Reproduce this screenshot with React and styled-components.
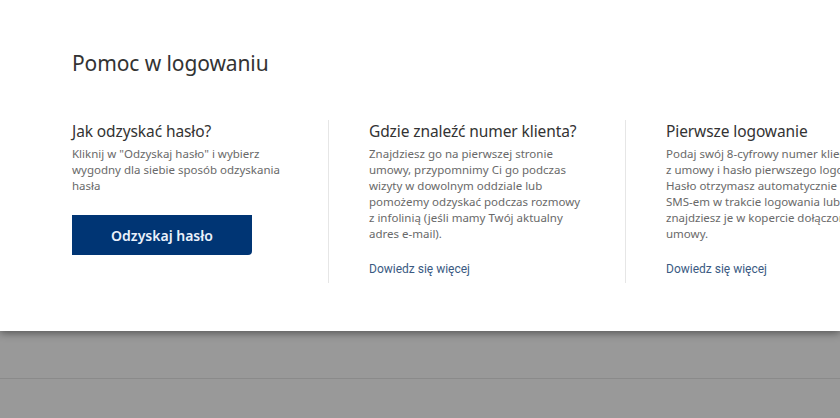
import React from "react";
import styled, {createGlobalStyle} from "styled-components";

const GlobalStyle = createGlobalStyle`
  html, body {
    margin: 0;
    padding: 0;
    background: #999999;
    font-family: "Noto Sans", "Liberation Sans", sans-serif;
  }
`;

const Page = styled.div`
  width: 840px;
  height: 418px;
  overflow: hidden;
  background: #999999;
`;

const Modal = styled.div`
  background: #ffffff;
  height: 331px;
  box-sizing: border-box;
  padding: 48px 0 0 72px;
  box-shadow: 0 2px 8px rgba(0, 0, 0, 0.45);
  position: relative;
  z-index: 1;
  overflow: hidden;
`;

const Title = styled.h1`
  margin: 0;
  font-size: 21px;
  font-weight: 400;
  color: #333333;
  line-height: 30px;
  letter-spacing: -0.1px;
`;

const Columns = styled.div`
  display: flex;
  margin-top: 42px;
  width: 900px;
`;

const Column = styled.div`
  display: flex;
  flex-direction: column;
  align-items: flex-start;
  width: 297px;
  height: 163px;
  box-sizing: border-box;
  padding: 0 40px 6px;
  border-left: 1px solid #e6e6e6;

  &:first-child {
    padding-left: 0;
    width: 256px;
    border-left: 0;
  }
`;

const Heading = styled.h2`
  margin: 0 0 4px;
  font-size: 15.5px;
  font-weight: 400;
  color: #333333;
  line-height: 22px;
  white-space: nowrap;
  letter-spacing: -0.1px;
`;

const Text = styled.p`
  margin: 0;
  font-size: 11.5px;
  line-height: 16px;
  color: #696969;
  white-space: nowrap;
`;

const Button = styled.button`
  margin-top: 21px;
  width: 180px;
  height: 40px;
  border: 0;
  border-radius: 0 0 4px 0;
  background: #003574;
  color: #eaf1fb;
  font-family: "Noto Sans", "Liberation Sans", sans-serif;
  font-size: 14px;
  font-weight: 600;
  cursor: pointer;
`;

const Link = styled.a`
  margin-top: auto;
  font-family: Roboto, "Liberation Sans", sans-serif;
  font-size: 12px;
  line-height: 16px;
  color: #3a5a82;
  text-decoration: none;
`;

const Backdrop = styled.div`
  height: 47px;
  border-bottom: 1px solid #8a8a8a;
`;

const columns = [
  {
    heading: "Gdzie znaleźć numer klienta?",
    lines: [
      "Znajdziesz go na pierwszej stronie",
      "umowy, przypomnimy Ci go podczas",
      "wizyty w dowolnym oddziale lub",
      "pomożemy odzyskać podczas rozmowy",
      "z infolinią (jeśli mamy Twój aktualny",
      "adres e-mail).",
    ],
  },
  {
    heading: "Pierwsze logowanie",
    lines: [
      "Podaj swój 8-cyfrowy numer klienta",
      "z umowy i hasło pierwszego logowania.",
      "Hasło otrzymasz automatycznie",
      "SMS-em w trakcie logowania lub",
      "znajdziesz je w kopercie dołączonej do",
      "umowy.",
    ],
  },
];

const Lines = ({lines}) => (
  <Text>
    {lines.map((line, i) => (
      <React.Fragment key={i}>
        {line}
        {i < lines.length - 1 && <br/>}
      </React.Fragment>
    ))}
  </Text>
);

const App = () => {
  return (
    <Page>
      <GlobalStyle/>
      <Modal>
        <Title>Pomoc w logowaniu</Title>
        <Columns>
          <Column>
            <Heading>Jak odzyskać hasło?</Heading>
            <Lines
              lines={[
                'Kliknij w "Odzyskaj hasło" i wybierz',
                "wygodny dla siebie sposób odzyskania",
                "hasła",
              ]}
            />
            <Button type="button">Odzyskaj hasło</Button>
          </Column>
          {columns.map((col) => (
            <Column key={col.heading}>
              <Heading>{col.heading}</Heading>
              <Lines lines={col.lines}/>
              <Link href="#">Dowiedz się więcej</Link>
            </Column>
          ))}
        </Columns>
      </Modal>
      <Backdrop/>
    </Page>
  );
};

export default App;
